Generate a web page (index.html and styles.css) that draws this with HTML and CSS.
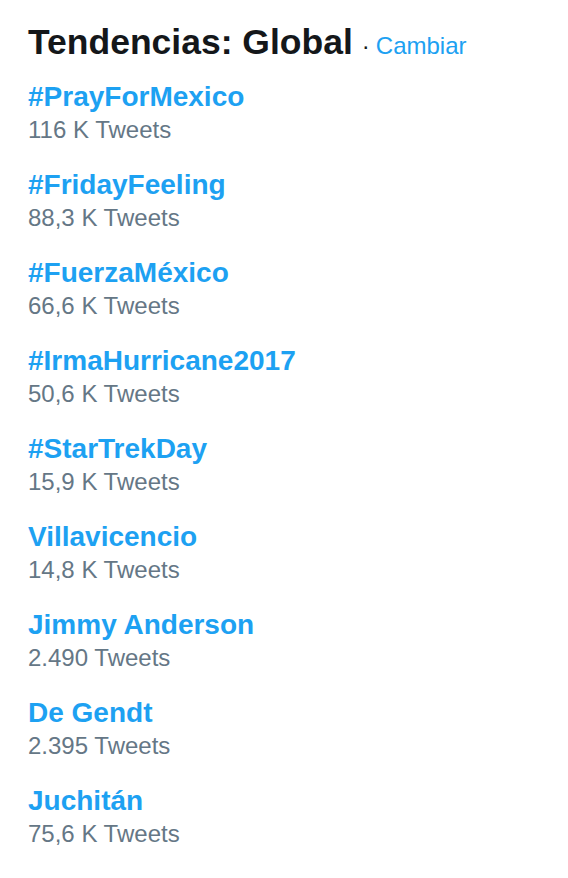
FILE: index.html
```html
<!DOCTYPE html>
<html lang="es">
<head>
<meta charset="utf-8">
<link rel="stylesheet" href="styles.css">
</head>
<body>
<div class="trends">
  <div class="header">
    <h3 class="title">Tendencias: Global</h3>
    <span class="dot">·</span>
    <a class="change">Cambiar</a>
  </div>
  <ul class="list">
    <li class="item"><span class="name">#PrayForMexico</span><span class="count">116 K Tweets</span></li>
    <li class="item"><span class="name">#FridayFeeling</span><span class="count">88,3 K Tweets</span></li>
    <li class="item"><span class="name">#FuerzaMéxico</span><span class="count">66,6 K Tweets</span></li>
    <li class="item"><span class="name">#IrmaHurricane2017</span><span class="count">50,6 K Tweets</span></li>
    <li class="item"><span class="name">#StarTrekDay</span><span class="count">15,9 K Tweets</span></li>
    <li class="item"><span class="name">Villavicencio</span><span class="count">14,8 K Tweets</span></li>
    <li class="item"><span class="name">Jimmy Anderson</span><span class="count">2.490 Tweets</span></li>
    <li class="item"><span class="name">De Gendt</span><span class="count">2.395 Tweets</span></li>
    <li class="item"><span class="name">Juchitán</span><span class="count">75,6 K Tweets</span></li>
  </ul>
</div>
</body>
</html>
```
FILE: styles.css
```css
html, body {
  margin: 0;
  padding: 0;
  background: #ffffff;
}
body {
  font-family: "Liberation Sans", Arial, sans-serif;
}
.trends {
  padding: 20px 28px 0 28px;
}
.header {
  display: flex;
  align-items: baseline;
  height: 44px;
}
.title {
  margin: 0;
  font-size: 35.5px;
  line-height: 44px;
  font-weight: bold;
  color: #14171a;
}
.dot {
  font-size: 24px;
  color: #14171a;
  margin: 0 6px 0 9px;
}
.change {
  font-size: 24px;
  color: #1da1f2;
}
.list {
  list-style: none;
  margin: 16px 0 0 0;
  padding: 0;
}
.item {
  display: flex;
  flex-direction: column;
  margin-bottom: 22px;
}
.name {
  font-size: 28px;
  line-height: 33px;
  font-weight: bold;
  color: #1da1f2;
}
.count {
  font-size: 24px;
  line-height: 33px;
  color: #657786;
}
```
